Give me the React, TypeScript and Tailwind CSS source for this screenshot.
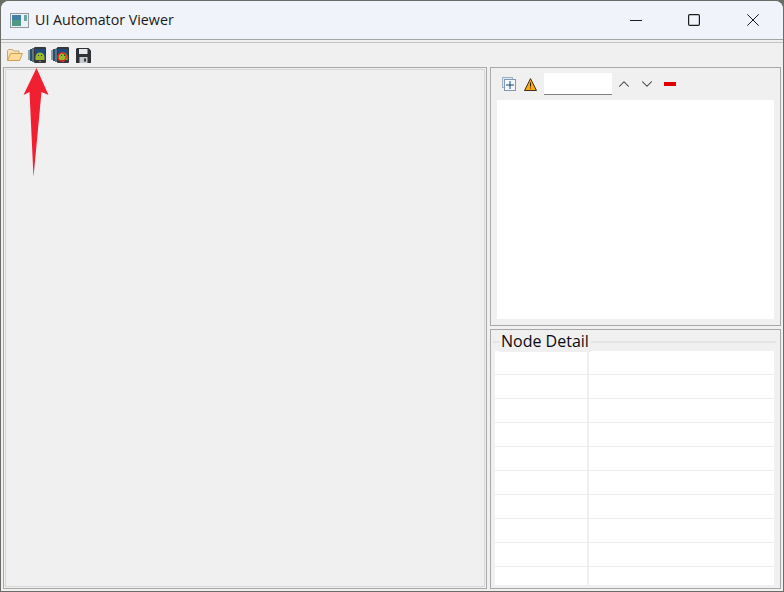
import { ChevronUp, ChevronDown } from 'lucide-react';

function AppIcon() {
  return (
    <svg width="20" height="15" viewBox="0 0 20 15" className="shrink-0">
      <rect x="0.5" y="0.5" width="18" height="14" fill="#eef1f3" stroke="#9298a0" />
      <rect x="2" y="2" width="9" height="11" fill="#4a9a86" />
      <rect x="2" y="2" width="9" height="5" fill="#3f7fa8" />
      <rect x="14" y="2" width="3" height="6" fill="#6aa8a8" />
    </svg>
  );
}

function PhoneIcon({ red }: { red?: boolean }) {
  return (
    <svg width="18" height="16" viewBox="0 0 18 16" className="shrink-0">
      <rect x="0" y="3" width="2" height="10" fill="#8fa0aa" />
      <rect x="2" y="2" width="2" height="12" fill="#24506e" />
      <rect x="4" y="1" width="2" height="14" fill="#5c7484" />
      <rect x="6" y="0" width="12" height="16" rx="1" fill="#35373b" />
      <rect x="7" y="2" width="10" height="11" fill="#1e4c7c" />
      <path d="M7.5 13V10a4.5 4.5 0 0 1 9 0v3z" fill="#9ab82e" />
      <rect x="10" y="8" width="1" height="1" fill="#254050" />
      <rect x="13" y="8" width="1" height="1" fill="#254050" />
      <rect x="11" y="14" width="2" height="1" fill="#8a8a8a" />
      {red && <circle cx="11" cy="10" r="4.2" fill="none" stroke="#e81c1c" strokeWidth="1.2" />}
      {red && <rect x="4" y="1" width="1" height="1" fill="#e8d040" />}
    </svg>
  );
}

function FolderIcon() {
  return (
    <svg width="16" height="12" viewBox="0 0 16 12" className="shrink-0">
      <path d="M0.5 11V1.5L1.5 0.5h4l1 1.5h5.5v2.5" fill="#f6e2b8" stroke="#c8a870" />
      <path d="M0.6 11.5L3.5 4.5h12l-3 7z" fill="#fcdc98" stroke="#cf9f50" />
    </svg>
  );
}

function SaveIcon() {
  return (
    <svg width="15" height="15" viewBox="0 0 15 15" className="shrink-0">
      <path d="M0 1l1-1h11.5l2.5 2.5V15H0z" fill="#2f3136" />
      <rect x="3" y="1" width="8.5" height="5" fill="#e6e8ea" />
      <rect x="3.5" y="9" width="8" height="6" fill="#c4c8cc" />
      <rect x="8" y="10.5" width="2" height="3" fill="#2f3136" />
    </svg>
  );
}

function ExpandIcon() {
  return (
    <svg width="14" height="14" viewBox="0 0 14 14" className="shrink-0">
      <rect x="0.5" y="0.5" width="10" height="10" fill="#dfe8f1" stroke="#a0b2c6" />
      <rect x="2.5" y="2.5" width="11" height="11" fill="#f4f7fa" stroke="#8398b2" />
      <path d="M8 4v8M4 8h8" stroke="#0e4a78" strokeWidth="1" />
    </svg>
  );
}

function WarningIcon() {
  return (
    <svg width="13" height="13" viewBox="0 0 13 13" className="shrink-0">
      <path d="M6.5 0.6L12.5 12.5H0.5z" fill="#fba612" stroke="#2a2008" strokeWidth="0.9" strokeLinejoin="round" />
      <rect x="6" y="4.5" width="1" height="4" fill="#2a2008" />
      <rect x="6" y="9.5" width="1" height="1" fill="#2a2008" />
    </svg>
  );
}

function RedArrow() {
  return (
    <svg width="30" height="112" viewBox="0 0 30 112" className="absolute left-[21px] top-[67px]">
      <path d="M15.5 1L27.5 28L20.5 25L12.5 110L8.5 25L2.5 28z" fill="#f11f32" />
    </svg>
  );
}

const rows = Array.from({ length: 10 });

export default function App() {
  return (
    <div className="relative h-[592px] w-[784px] overflow-hidden bg-[#6c6c66]">
      <div className="ml-[1px] mt-[1px] flex h-[590px] w-[782px] flex-col overflow-hidden rounded-t-[8px] bg-[#f0f0f0] font-['Open_Sans','Liberation_Sans',sans-serif]">
        {/* title bar */}
        <div className="flex h-[39px] shrink-0 items-center border-b border-[#a4a4a4] bg-[#f0f3f9] pl-[9px]">
          <AppIcon />
          <span className="ml-[5px] text-[14.25px] text-[#1a1a1a]">UI Automator Viewer</span>
          <div className="ml-auto flex items-center pr-[24px]">
            <svg width="12" height="12" viewBox="0 0 12 12" className="mr-[46px]">
              <path d="M0 6.5h12" stroke="#1c1c1c" strokeWidth="1" />
            </svg>
            <svg width="12" height="12" viewBox="0 0 12 12" className="mr-[47px]">
              <rect x="0.6" y="0.6" width="10.8" height="10.8" rx="1.2" fill="none" stroke="#1c1c1c" strokeWidth="1.2" />
            </svg>
            <svg width="12" height="12" viewBox="0 0 12 12">
              <path d="M0.3 0.3L11.7 11.7M11.7 0.3L0.3 11.7" stroke="#1c1c1c" strokeWidth="1" />
            </svg>
          </div>
        </div>

        {/* toolbar */}
        <div className="mt-[2px] flex h-[25px] shrink-0 items-center border-t border-[#c4c4c4] pl-[6px]">
          <FolderIcon />
          <div className="ml-[5px]"><PhoneIcon /></div>
          <div className="ml-[5px]"><PhoneIcon red /></div>
          <div className="ml-[7px]"><SaveIcon /></div>
        </div>

        <div className="flex min-h-0 flex-1 px-[2px]">
          {/* screenshot panel */}
          <div className="h-[522px] w-[484px] shrink-0 border border-[#a8a8a8] p-[1px]">
            <div className="h-full w-full border border-[#d8d8d8] bg-[#f0f0f0]" />
          </div>

          <div className="ml-[3px] flex w-[292px] flex-col gap-[3px]">
            {/* hierarchy panel */}
            <div className="flex h-[259px] shrink-0 flex-col border border-[#a8a8a8] px-[6px] pb-[6px]">
              <div className="flex h-[32px] shrink-0 items-center pl-[5px]">
                <ExpandIcon />
                <div className="ml-[8px]"><WarningIcon /></div>
                <div className="ml-[7px] h-[22px] w-[68px] border-b border-[#808080] bg-white" />
                <ChevronUp size={18} strokeWidth={1.4} className="ml-[3px] text-[#333]" />
                <ChevronDown size={18} strokeWidth={1.4} className="ml-[5px] text-[#333]" />
                <div className="ml-[8px] h-[4px] w-[12px] bg-[#e00000]" />
              </div>
              <div className="flex-1 bg-white" />
            </div>

            {/* node detail */}
            <div className="relative flex h-[260px] shrink-0 flex-col border border-[#a8a8a8] pb-[3px] pl-[4px] pr-[6px]">
              <div className="absolute left-[2px] right-[4px] top-[11px] h-[2px] bg-[#e4e4e4]" />
              <div className="relative h-[21px] shrink-0">
                <span className="absolute left-[4px] top-[1px] bg-[#f0f0f0] px-[2px] text-[16px] leading-[21px] text-[#0a0a14]">Node Detail</span>
              </div>
              <div className="flex-1 overflow-hidden bg-white">
                {rows.map((_, i) => (
                  <div key={i} className="flex h-[24px] border-b border-[#ececec]">
                    <div className="w-[94px] border-r-2 border-[#eef0f4]" />
                    <div className="flex-1" />
                  </div>
                ))}
              </div>
            </div>
          </div>
        </div>
      </div>
      <RedArrow />
    </div>
  );
}
